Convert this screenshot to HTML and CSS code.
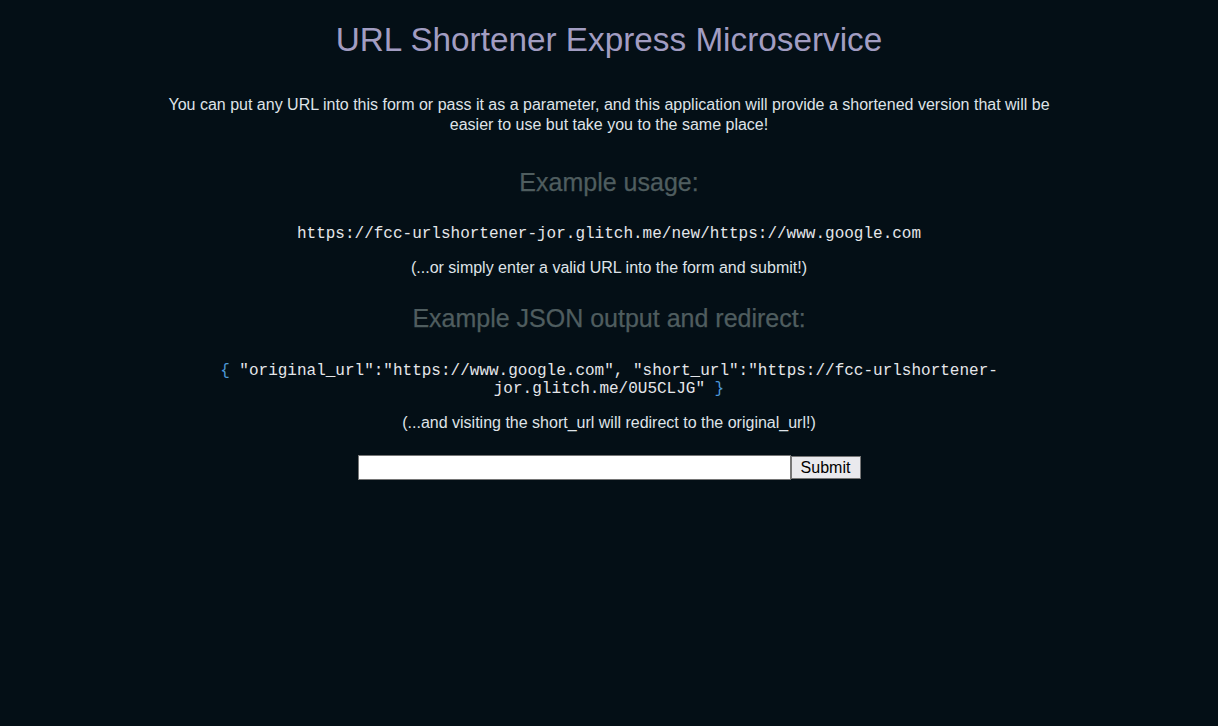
FILE: index.html
```html
<!DOCTYPE html>
<html lang="en">
<head>
<meta charset="utf-8">
<title>URL Shortener Express Microservice</title>
<link rel="stylesheet" href="styles.css">
</head>
<body>
<main class="page">
  <h1 class="title">URL Shortener Express Microservice</h1>
  <p class="intro">You can put any URL into this form or pass it as a parameter, and this application will provide a shortened version that will be easier to use but take you to the same place!</p>
  <h2 class="section section-first">Example usage:</h2>
  <code class="code">https://fcc-urlshortener-jor.glitch.me/new/https://www.google.com</code>
  <p class="note">(...or simply enter a valid URL into the form and submit!)</p>
  <h2 class="section section-second">Example JSON output and redirect:</h2>
  <code class="code json"><span class="brace">{</span> "original_url":"https://www.google.com", "short_url":"https://fcc-urlshortener-jor.glitch.me/0U5CLJG" <span class="brace">}</span></code>
  <p class="note">(...and visiting the short_url will redirect to the original_url!)</p>
  <form class="form" action="#">
    <input class="url-input" type="text" name="url">
    <button class="submit" type="submit">Submit</button>
  </form>
</main>
</body>
</html>
```
FILE: styles.css
```css
html, body {
  margin: 0;
  padding: 0;
  background: #040f16;
}
body {
  font-family: "Liberation Sans", Arial, sans-serif;
  color: #dfe3e8;
}
.page {
  width: 900px;
  margin: 0 auto;
  padding-top: 21px;
  display: flex;
  flex-direction: column;
  align-items: center;
  text-align: center;
}
.title {
  margin: 0;
  font-size: 33.3px;
  font-weight: normal;
  line-height: 38px;
  color: #a29dc2;
}
.intro {
  margin: 36px 0 0;
  font-size: 16px;
  line-height: 20px;
}
.section {
  font-size: 25px;
  font-weight: normal;
  line-height: 29px;
  color: #4f5d5f;
  -webkit-text-stroke: 0.25px #4f5d5f;
}
.section-first {
  margin: 33px 0 0;
}
.section-second {
  margin: 26px 0 0;
}
.code {
  display: block;
  margin-top: 28px;
  font-family: "Liberation Mono", "Courier New", monospace;
  font-size: 16px;
  line-height: 18px;
  color: #e4e6ea;
  max-width: 800px;
}
.json {
  margin-top: 29px;
}
.brace {
  color: #4d97d6;
}
.note {
  margin: 15px 0 0;
  font-size: 16px;
  line-height: 20px;
}
.form {
  margin-top: 22px;
  display: flex;
  align-items: center;
}
.url-input {
  box-sizing: border-box;
  width: 433px;
  height: 25px;
  margin: 0;
  border: 1px solid #767676;
  background: #fff;
  font-size: 16px;
}
.submit {
  box-sizing: border-box;
  width: 70px;
  height: 23px;
  margin: 0;
  padding: 0;
  border: 1px solid #767676;
  background: #e9e9ed;
  font-family: "Liberation Sans", Arial, sans-serif;
  font-size: 16px;
  color: #000;
}
```
